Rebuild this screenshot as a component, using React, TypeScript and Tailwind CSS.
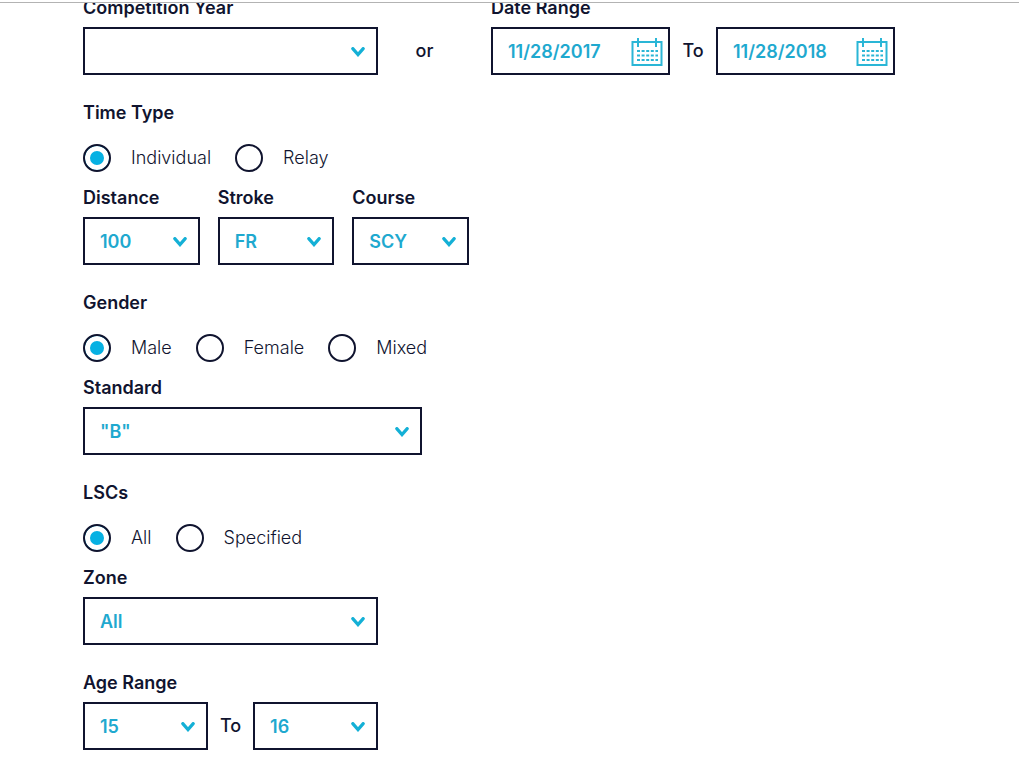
import { useState, type ReactNode } from 'react';

interface SelectBoxProps {
  id: string;
  label: string;
  options: string[];
  hideLabel?: boolean;
  className?: string;
}

function SelectBox({ id, label, options, hideLabel, className = '' }: SelectBoxProps) {
  return (
    <div className={`w-full ${className}`}>
      <label htmlFor={id} className={hideLabel ? 'sr-only' : 'block mb-1.5 leading-[26px] font-semibold'}>
        {label}
      </label>
      <div className="relative">
        <select
          id={id}
          className="block w-full h-12 pt-0.5 pl-[15px] pr-9 appearance-none bg-white border-2 border-[#10142f] rounded-none font-semibold text-[#1fa9cf] outline-none focus:border-[#14b0d6]"
        >
          {options.map((option) => (
            <option key={option}>{option}</option>
          ))}
        </select>
        <svg
          viewBox="0 0 14 10"
          className="absolute right-[13px] top-5 w-[14px] h-[10px] pointer-events-none"
          fill="none"
          stroke="#14b0d6"
          strokeWidth="3.2"
          strokeLinecap="round"
        >
          <path d="M1.8 1.6 L7 7.6 L12.2 1.6" />
        </svg>
      </div>
    </div>
  );
}

function CalendarIcon() {
  return (
    <svg viewBox="0 0 32 30" className="w-8 h-[30px]" fill="none" stroke="#2ab6d6">
      <path strokeWidth="2" d="M1.5 5 H30.5 V28 H1.5 Z" />
      <path strokeWidth="2" d="M7 1 V10 M25 1 V10" />
      <path strokeWidth="2" strokeDasharray="3 1.6" d="M6 14 H27 M6 18.5 H27 M6 23 H27" />
    </svg>
  );
}

function DateBox({ id, label, value }: { id: string; label: string; value: string }) {
  const [date, setDate] = useState(value);

  return (
    <div className="flex items-center w-full max-w-[179px] h-12 pt-0.5 pl-[15px] pr-[5px] border-2 border-[#10142f] bg-white">
      <input
        id={id}
        type="text"
        aria-label={label}
        value={date}
        onChange={(e) => setDate(e.target.value)}
        className="flex-1 min-w-0 font-semibold text-[#1fa9cf] outline-none"
      />
      <button type="button" aria-label="Open calendar" className="cursor-pointer">
        <CalendarIcon />
      </button>
    </div>
  );
}

function RadioGroup({ name, legend, options }: { name: string; legend: string; options: string[] }) {
  return (
    <fieldset>
      <legend className="mb-[18px] leading-[26px] font-semibold">{legend}</legend>
      <div className="flex flex-wrap gap-6">
        {options.map((option, i) => (
          <label key={option} className="flex items-center gap-5 leading-7 font-light cursor-pointer">
            <input
              type="radio"
              name={name}
              defaultChecked={i === 0}
              className="w-7 h-7 appearance-none rounded-full border-2 border-[#10142f] bg-white checked:bg-[#06b1e3] checked:shadow-[inset_0_0_0_5px_#fff]"
            />
            {option}
          </label>
        ))}
      </div>
    </fieldset>
  );
}

function Section({ children }: { children: ReactNode }) {
  return <section className="flex flex-col gap-[13px]">{children}</section>;
}

export default function App() {
  return (
    <div className="bg-white text-[#10142f] text-lg font-['Inter',sans-serif]">
      <header className="h-[3px] border-b border-[#b3b3b3]" />
      <main className="overflow-hidden pl-[83px] pr-6">
        <form className="-mt-2 pb-2 flex flex-col gap-[25px]">
          <div className="flex items-end">
            <SelectBox id="year" label="Competition Year" options={['', '2018', '2017']} className="max-w-[295px]" />
            <span className="w-[113px] pr-5 text-center leading-[48px] font-medium">or</span>
            <fieldset className="flex-1 max-w-[404px]">
              <legend className="mb-1.5 leading-[26px] font-semibold">Date Range</legend>
              <div className="flex items-center justify-between">
                <DateBox id="from" label="From date" value="11/28/2017" />
                <span className="px-3 font-medium">To</span>
                <DateBox id="to" label="To date" value="11/28/2018" />
              </div>
            </fieldset>
          </div>

          <Section>
            <RadioGroup name="time-type" legend="Time Type" options={['Individual', 'Relay']} />
            <div className="flex gap-[18px] max-w-[386px]">
              <SelectBox id="distance" label="Distance" options={['100', '50', '200']} />
              <SelectBox id="stroke" label="Stroke" options={['FR', 'BK', 'BR', 'FL', 'IM']} />
              <SelectBox id="course" label="Course" options={['SCY', 'SCM', 'LCM']} />
            </div>
          </Section>

          <Section>
            <RadioGroup name="gender" legend="Gender" options={['Male', 'Female', 'Mixed']} />
            <SelectBox id="standard" label="Standard" options={['"B"', '"A"']} className="max-w-[339px]" />
          </Section>

          <Section>
            <RadioGroup name="lscs" legend="LSCs" options={['All', 'Specified']} />
            <SelectBox id="zone" label="Zone" options={['All']} className="max-w-[295px]" />
          </Section>

          <fieldset>
            <legend className="mb-1.5 leading-[26px] font-semibold">Age Range</legend>
            <div className="flex items-center justify-between max-w-[295px]">
              <SelectBox id="age-from" label="From age" options={['15', '16']} hideLabel className="max-w-[125px]" />
              <span className="px-3 font-medium">To</span>
              <SelectBox id="age-to" label="To age" options={['16', '17']} hideLabel className="max-w-[125px]" />
            </div>
          </fieldset>
        </form>
      </main>
    </div>
  );
}
